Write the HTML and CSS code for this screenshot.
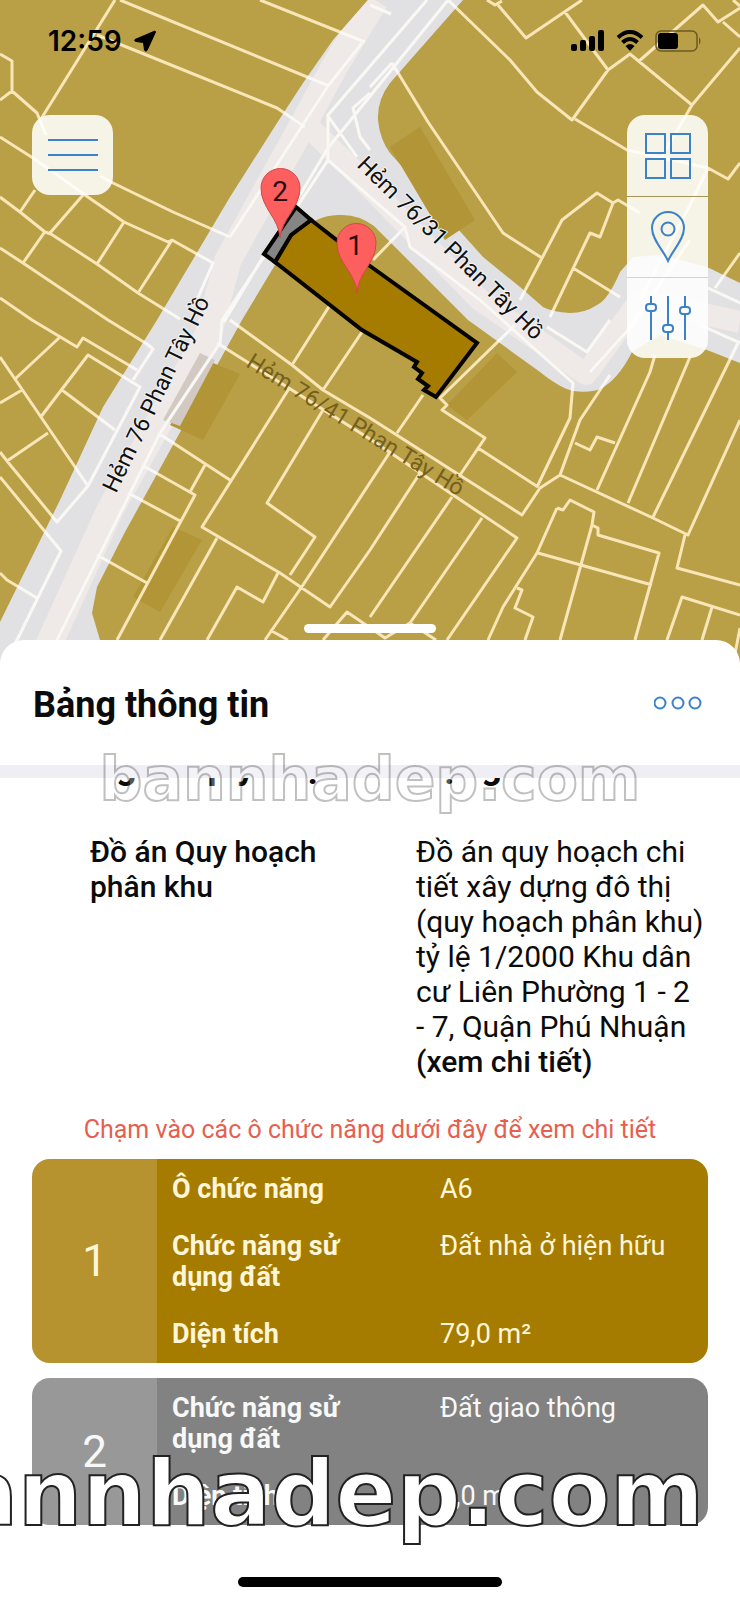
FILE: index.html
```html
<!DOCTYPE html>
<html lang="vi">
<head>
<meta charset="utf-8">
<meta name="viewport" content="width=device-width, initial-scale=1">
<title>Bảng thông tin</title>
<link rel="stylesheet" href="styles.css">
</head>
<body>
<main class="screen">
  <section class="map">
    <svg class="map-canvas" viewBox="0 0 740 664" role="img" aria-label="Bản đồ quy hoạch">
      <defs>
        <path id="roads" d="M368 0 333 40 303 83 277 123 230 197 157 320 103 407 60 500 0 622V664H108L100 640 92 613 97 587 125 532 242 320 290 240Q315 214 340 215 358 214 374 226L450 302 468 320 540 372Q560 388 573 391 590 393 600 389 618 380 632 352L660 335 707 350 740 363V283L707 267 660 255 633 257 620 272Q608 300 597 305 585 313 570 313 552 312 543 307L520 287 483 257 390 153Q380 140 378 120 377 100 390 83L463 0Z"/>
        <clipPath id="road-clip"><use href="#roads"/></clipPath>
        <path id="plots" d="M115 0 41 119M120 0 329 86M260 0 365 42M97 35 277 108 305 127M0 54 12 61V91L0 100M12 91 37 113 46 135M0 137 33 158 60 177 85 195 124 222 168 242 172 240 213 263 197 300M100 176 113 183 173 212 230 237M0 197 20 212 45 232 51 234 97 264 138 293 180 319M35 190 20 212M83 195 50 233M44 233 23 263M124 222 97 264M172 240 138 293M0 248 23 263 108 320 147 344 153 349 133 380M0 298 32 320 77 347 83 338 137 370M60 337 15 379M0 357 15 379 88 486M0 403 22 390M40 418 88 355 140 387 88 486 57 522 7 461 0 452M62 390 115 430M48 433 7 461M0 477 61 551 17 640 5 664M0 573 7 580 37 598
          M362 43 328 86 230 237M427 0 328 115V160L222 320 220 343 160 433 57 640 45 664M448 0 328 148 224 322M328 160 370 197 405 227 410 247 480 300 573 383 570 418 537 487M328 116 357 157M370 93 353 108 360 137 370 150M370 5 391 14M405 227 373 260
          M448 0 510 60 537 92 572 120 608 70 630 54 692 105 740 48M692 105 660 160M575 119 627 150 708 168 728 179 740 163M708 168 690 205 640 300M487 0 495 5 502 1M498 5 526 38 582 0M565 12 608 70M638 62 703 5 718 22 740 8M723 22 740 37M733 0 740 6M392 63 428 122 503 233 542 258M392 63 370 87M520 300 562 220 597 193 613 203 600 237 590 233 550 317M613 203 618 200 640 213M573 268 620 297M740 253 715 288M547 327 587 352 610 320M708 288 740 303M700 325 740 343
          M230 320 292 365 323 390 370 418 522 515 540 488 560 475 653 518 688 535 740 420M217 343 370 439 517 538 447 640M292 365 330 305M323 390 362 332M290 387 202 527 280 573 330 607 370 550 420 473M323 410 267 503 315 537 290 575M390 452 303 585 265 640M452 497 370 617M482 518 410 623M158 433 230 480M205 465 190 492M142 465 195 495 117 640M128 493 182 522M97 555 147 583M217 538 160 640M278 573 263 602 237 587 207 640M270 630 288 640M323 640 347 612 385 638 410 623 436 640
          M423 395 397 433M515 325 440 398 447 405 442 410 485 438 460 475M478 448 538 487M655 355 650 372 597 490M690 357 628 503M738 343 653 517M610 375 580 420 560 475M575 443 590 450 597 437 615 443M557 508 563 510 570 500 594 512 592 525 598 528V535L659 553 635 640M557 508 537 553 503 607 488 640M538 553 652 585M592 525 560 640M517 588 522 590 515 608 533 617 525 640M685 535 677 568 740 585M667 640 682 597 740 615M712 607 702 640M740 628 733 664M690 240 628 330 590 372"/>
      </defs>
      <rect class="land" width="740" height="664"/>
      <use class="road" href="#roads"/>
      <g clip-path="url(#road-clip)">
        <path class="road-core" d="M375 0 335 66 300 130 228 260 208 335 110 510 40 664"/>
        <path class="road-core side" d="M312 130 348 165 480 300 586 374 640 300 740 322"/>
      </g>
      <path class="shade" d="M390 147 420 127 475 220 445 240ZM213 363 240 374 203 440 170 425ZM173 527 202 540 160 612 133 597ZM497 353 517 372 467 420 447 405Z"/>
      <path class="shade faint" d="M200 353 215 360 180 426 163 420Z"/>
      <use class="plot-line" href="#plots"/>
      <use class="plot-line on-road" href="#plots" clip-path="url(#road-clip)"/>
      <text class="street" transform="translate(116 494) rotate(-64)">Hẻm 76 Phan Tây Hồ</text>
      <text class="street" transform="translate(356 166) rotate(44.500)">Hẻm 76/31 Phan Tây Hồ</text>
      <text class="street muted" transform="translate(245 366) rotate(31.500)">Hẻm 76/41 Phan Tây Hồ</text>
      <path class="lot lot-main" d="M311 220 370 266 477 343 436 397 424 390 428 386 418 379 422 373 414 367 417 362 362 330 275 262 291 235Z"/>
      <path class="lot lot-road" d="M296 207 311 220 291 235 275 262 264 254Z"/>
      <path class="pin" d="M280 238C279 218 261 208 261 188A19 19 0 0 1 300 188C300 208 282 218 280 238Z"/>
      <path class="pin" d="M357 293C356 273 337 263 337 243A19 19 0 0 1 376 243C376 263 358 273 357 293Z"/>
      <text class="pin-label" x="280" y="201">2</text>
      <text class="pin-label" x="355" y="255">1</text>
    </svg>

    <div class="status">
      <div class="status-side">
        <span>12:59</span>
        <svg width="24" height="24" viewBox="0 0 24 24" aria-hidden="true"><path d="M22 2 2 10.500Q1 12 3 12.500L10.500 13.500 11.500 21Q12.500 23 14 21.500L22.500 3Z" stroke="#000" stroke-linejoin="round"/></svg>
      </div>
      <div class="status-side">
        <svg width="34" height="22" viewBox="0 0 34 22" aria-hidden="true"><rect y="14" width="6" height="7" rx="2"/><rect x="9" y="10" width="6" height="11" rx="2"/><rect x="18" y="6" width="6" height="15" rx="2"/><rect x="27" width="6" height="21" rx="2"/></svg>
        <svg width="28" height="22" viewBox="0 0 28 22" aria-hidden="true"><path d="M2 7.500Q14-3.500 26 7.500M6.500 12.500Q14 5.500 21.500 12.500" fill="none" stroke="#000" stroke-width="4"/><path d="M9.500 16Q14 12 18.500 16L14 21Z"/></svg>
        <svg width="47" height="22" viewBox="0 0 47 22" aria-hidden="true"><rect x="1" y="1" width="41" height="20" rx="5" fill="none" stroke="#6b5a22" stroke-width="1.500"/><rect x="3" y="3" width="20" height="16" rx="3"/><path d="M44 7Q47 11 44 15Z" fill="#6b5a22"/></svg>
      </div>
    </div>

    <button class="menu" type="button" aria-label="Menu">
      <svg width="50" height="34" viewBox="0 0 50 34"><path d="M0 2H50M0 17H50M0 32H50"/></svg>
    </button>
    <div class="tools">
      <button type="button" aria-label="Lớp bản đồ"><svg width="48" height="48" viewBox="0 0 48 48"><path d="M2 2H21V21H2ZM27 2H46V21H27ZM2 27H21V46H2ZM27 27H46V46H27Z"/></svg></button>
      <button type="button" aria-label="Vị trí"><svg width="36" height="52" viewBox="0 0 36 52"><path d="M18 50C14 40 2 29 2 17A16 16 0 0 1 34 17C34 29 22 40 18 50Z"/><circle cx="18" cy="18" r="6.500"/></svg></button>
      <button type="button" aria-label="Bộ lọc"><svg width="48" height="46" viewBox="0 0 48 46"><path d="M7 1V9M7 16V45M24 1V30M24 37V45M41 1V12M41 19V45"/><rect x="2" y="9" width="10" height="7" rx="3"/><rect x="19" y="30" width="10" height="7" rx="3"/><rect x="36" y="12" width="10" height="7" rx="3"/></svg></button>
    </div>
    <span class="grabber"></span>
  </section>

  <section class="panel">
    <header class="panel-head">
      <h1>Bảng thông tin</h1>
      <button class="more" type="button" aria-label="Thêm"><svg width="48" height="14" viewBox="0 0 48 14"><circle cx="6" cy="7" r="5.500"/><circle cx="24" cy="7" r="5.500"/><circle cx="41" cy="7" r="5.500"/></svg></button>
    </header>
    <div class="panel-body">
      <div class="scrolled"><h2>Thông tin quy hoạch sử dụng đất</h2></div>
      <dl class="plan">
        <dt>Đồ án Quy hoạch phân khu</dt>
        <dd>Đồ án quy hoạch chi tiết xây dựng đô thị (quy hoạch phân khu) tỷ lệ 1/2000 Khu dân cư Liên Phường 1 - 2 <span class="keep">- 7,</span> Quận Phú Nhuận <a href="#chi-tiet">(xem chi tiết)</a></dd>
      </dl>
      <p class="hint">Chạm vào các ô chức năng dưới đây để xem chi tiết</p>
      <div class="cards">
        <article class="card housing">
          <span class="card-no">1</span>
          <dl class="facts">
            <dt>Ô chức năng</dt><dd>A6</dd>
            <dt>Chức năng sử dụng đất</dt><dd>Đất nhà ở hiện hữu</dd>
            <dt>Diện tích</dt><dd>79,0 m²</dd>
          </dl>
        </article>
        <article class="card traffic">
          <span class="card-no">2</span>
          <dl class="facts">
            <dt>Chức năng sử dụng đất</dt><dd>Đất giao thông</dd>
            <dt>Diện tích</dt><dd>6,0 m²</dd>
          </dl>
        </article>
      </div>
    </div>
    <span class="mark mark-top">bannhadep.com</span>
    <span class="mark mark-bottom">bannhadep.com</span>
  </section>
  <footer class="home"><span></span></footer>
</main>
</body>
</html>
```

FILE: styles.css
```css
* { box-sizing: border-box; }
body { margin: 0; background: #fff; color: #0b0b0b; font-family: Roboto, "Noto Sans", sans-serif; }
h1, h2, p, dl, dd { margin: 0; }
button { border: 0; padding: 0; background: none; }

.screen { min-height: 100vh; display: flex; flex-direction: column; overflow: hidden; }

.map { position: relative; }
.map-canvas { display: block; width: 100%; height: auto; }
.land { fill: #b99f45; }
.road { fill: #e1e1e3; }
.road-core { fill: none; stroke: #efe9e7; stroke-width: 27; stroke-linejoin: round; }
.road-core.side { stroke-width: 22; }
.shade { fill: #b19536; }
.shade.faint { fill: #d2c9c3; }
.plot-line { fill: none; stroke: #f8e6b8; stroke-width: 3; stroke-linejoin: round; }
.plot-line.on-road { stroke: #f8f8f9; }
.street { font-size: 23px; fill: #111; stroke: #f4f2f2; stroke-width: 2px; paint-order: stroke; }
.street.muted { fill: #755f1e; stroke: none; }
.lot { stroke: #060400; stroke-width: 4; }
.lot-main { fill: #a67c00; }
.lot-road { fill: #858585; }
.pin { fill: #fd5f5f; stroke: #cf4a46; stroke-width: 1; }
.pin-label { font-size: 28px; text-anchor: middle; fill: #2a0c0c; }

.status { position: absolute; top: 28px; left: 48px; right: 38px; height: 26px; display: flex; justify-content: space-between; align-items: center; }
.status-side { display: flex; align-items: center; gap: 11px; font: 600 28px/26px Inter, sans-serif; color: #000; }
.menu, .tools { position: absolute; top: 115px; border-radius: 18px; background: rgba(255, 255, 255, .87); }
.menu { left: 32px; width: 81px; height: 80px; display: grid; place-items: center; }
.tools { right: 32px; width: 81px; display: flex; flex-direction: column; }
.tools button { height: 81px; display: grid; place-items: center; }
.tools button + button { border-top: 1px solid #d5d3c8; }
.tools button:nth-child(2) { border-top-color: #a3925a; }
.menu svg, .tools svg, .more svg { display: block; fill: none; stroke: #3b82c8; stroke-width: 2; }
.grabber { position: absolute; left: 50%; bottom: 31px; width: 132px; height: 9px; margin-left: -66px; border-radius: 5px; background: #fff; }

.panel { position: relative; margin-top: -24px; border-radius: 24px 24px 0 0; background: #fff; }
.panel-head { display: flex; align-items: center; justify-content: space-between; height: 138px; padding: 0 38px 0 33px; border-bottom: 13px solid #efeef4; }
.panel-head h1 { padding-top: 4px; font-size: 36px; line-height: 42px; font-weight: 700; }
.scrolled { height: 8px; padding-left: 33px; overflow: hidden; display: flex; align-items: flex-end; }
.scrolled h2 { font-size: 36px; line-height: 40px; font-weight: 700; white-space: nowrap; }
.plan { display: grid; grid-template-columns: 242px 1fr; gap: 84px; padding: 48px 28px 0 90px; font-size: 30px; line-height: 35px; }
.plan dt { font-weight: 500; }
.plan a { color: inherit; font-weight: 500; text-decoration: none; }
.keep { white-space: nowrap; }
.hint { margin: 36px 0 14px; text-align: center; font-size: 25px; line-height: 30px; color: #e65f50; }
.cards { display: grid; gap: 15px; padding: 0 32px; }
.card { display: grid; grid-template-columns: 125px 1fr; border-radius: 18px; overflow: hidden; color: #fff; }
.card-no { display: grid; place-items: center; font-size: 44px; line-height: 52px; background: rgba(255, 255, 255, .18); }
.housing { background: #a67c00; color: #fff6d8; }
.traffic { background: #828282; color: #f8f8f8; }
.facts { display: grid; grid-template-columns: 180px 1fr; gap: 26px 88px; padding: 15px 15px 13px; font-size: 27px; line-height: 31px; }
.facts dt { font-weight: 700; }

.mark { position: absolute; font-family: "DejaVu Sans", sans-serif; font-weight: 700; white-space: nowrap; color: #fff; pointer-events: none; }
.mark-top { top: 104px; left: 0; right: 0; text-align: center; font-size: 60px; line-height: 70px; opacity: .3; -webkit-text-stroke: 2px #333; }
.mark-bottom { bottom: -21px; right: 36px; font-size: 90px; line-height: 104px; -webkit-text-stroke: 2px #222; }

.home { margin-top: auto; padding: 0 0 14px; display: flex; justify-content: center; }
.home span { width: 264px; height: 10px; border-radius: 5px; background: #000; }
```
